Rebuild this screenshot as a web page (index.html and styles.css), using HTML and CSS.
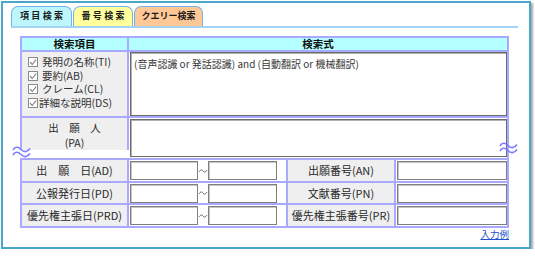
FILE: index.html
```html
<!DOCTYPE html>
<html lang="ja">
<head>
<meta charset="utf-8">
<link rel="stylesheet" href="styles.css">
</head>
<body>
<div class="frame">
  <div class="tabs">
    <div class="tab t1 spaced">項目検索</div>
    <div class="tab t2 spaced">番号検索</div>
    <div class="tab t3">クエリー検索</div>
  </div>
  <div class="grid">
    <div class="hd">検索項目</div>
    <div class="hd span3">検索式</div>

    <div class="lab checks">
      <div class="chk"><svg class="cb" viewBox="0 0 10 10"><rect x="0.5" y="0.5" width="9" height="9"/><path d="M2 5.2 L4.2 7.5 L8.2 2.5"/></svg>発明の名称(TI)</div>
      <div class="chk"><svg class="cb" viewBox="0 0 10 10"><rect x="0.5" y="0.5" width="9" height="9"/><path d="M2 5.2 L4.2 7.5 L8.2 2.5"/></svg>要約(AB)</div>
      <div class="chk"><svg class="cb" viewBox="0 0 10 10"><rect x="0.5" y="0.5" width="9" height="9"/><path d="M2 5.2 L4.2 7.5 L8.2 2.5"/></svg>クレーム(CL)</div>
      <div class="chk tight"><svg class="cb" viewBox="0 0 10 10"><rect x="0.5" y="0.5" width="9" height="9"/><path d="M2 5.2 L4.2 7.5 L8.2 2.5"/></svg>詳細な説明(DS)</div>
    </div>
    <div class="cell span3 pad"><div class="box big">(音声認識 or 発話認識) and (自動翻訳 or 機械翻訳)</div></div>

    <div class="lab two"><div>出　願　人</div><div>(PA)</div></div>
    <div class="cell span3 pad"><div class="box mid"></div></div>

    <div class="lab">出　願　日(AD)</div>
    <div class="cell range"><div class="inp w1"></div><svg class="tilde" viewBox="0 0 10 8"><path d="M1 5 C2.5 2.5 4 2.5 5 4 S7.5 5.5 9 3"/></svg><div class="inp w2"></div></div>
    <div class="lab">出願番号(AN)</div>
    <div class="cell one"><div class="inp w3"></div></div>

    <div class="lab">公報発行日(PD)</div>
    <div class="cell range"><div class="inp w1"></div><svg class="tilde" viewBox="0 0 10 8"><path d="M1 5 C2.5 2.5 4 2.5 5 4 S7.5 5.5 9 3"/></svg><div class="inp w2"></div></div>
    <div class="lab">文献番号(PN)</div>
    <div class="cell one"><div class="inp w3"></div></div>

    <div class="lab">優先権主張日(PRD)</div>
    <div class="cell range"><div class="inp w1"></div><svg class="tilde" viewBox="0 0 10 8"><path d="M1 5 C2.5 2.5 4 2.5 5 4 S7.5 5.5 9 3"/></svg><div class="inp w2"></div></div>
    <div class="lab">優先権主張番号(PR)</div>
    <div class="cell one"><div class="inp w3"></div></div>
  </div>
  <div class="example"><a href="#">入力例</a></div>

  <div class="band"></div>
  <svg class="wave wl" viewBox="0 0 20 14"><path d="M1 5 C3 1.5 6 1.5 9 4.5 S15 7.5 18 3.5"/><path d="M1 10 C3 6.5 6 6.5 9 9.5 S15 12.5 18 8.5"/></svg>
  <svg class="wave wr" viewBox="0 0 20 14"><path d="M1 5 C3 1.5 6 1.5 9 4.5 S15 7.5 18 3.5"/><path d="M1 10 C3 6.5 6 6.5 9 9.5 S15 12.5 18 8.5"/></svg>
</div>
</body>
</html>
```
FILE: styles.css
```css
body {
  margin: 0;
  background: #ffffff;
  font-family: "Noto Sans CJK JP", "Noto Sans", sans-serif;
  color: #222;
}

.frame {
  position: relative;
  box-sizing: border-box;
  margin: 1px 0 0 1px;
  width: 530px;
  height: 248px;
  border: 2px solid #4ba7c9;
  box-shadow: 2px 2px 2px rgba(0, 0, 0, 0.35);
  padding: 3px 0 0 8px;
}

.tabs {
  display: flex;
  gap: 1px;
  width: 507px;
  height: 20px;
  border-bottom: 2px solid #a6d3f5;
}

.tab {
  box-sizing: border-box;
  height: 20px;
  border: 1px solid #74b3e6;
  border-bottom: none;
  border-radius: 7px 7px 0 0;
  font-size: 9px;
  font-weight: bold;
  line-height: 18px;
  text-align: center;
  color: #1a1a1a;
}

.spaced { letter-spacing: 2.4px; text-indent: 2.4px; }
.t1 { width: 61px; background: #bdf7fd; }
.t2 { width: 60px; background: #ffff9e; }
.t3 { width: 69px; background: #ffc795; }

.grid {
  box-sizing: border-box;
  margin: 8px 0 0 9px;
  width: 489px;
  display: grid;
  grid-template-columns: 107px 159px 108px 113px;
  grid-template-rows: 14px 66px 42px 23px 22px 23px;
  border-top: 2px solid #a9a9ff;
  border-left: 2px solid #a9a9ff;
}

.grid > div {
  box-sizing: border-box;
  border-right: 2px solid #a9a9ff;
  border-bottom: 2px solid #a9a9ff;
}

.span3 { grid-column: span 3; }

.hd {
  background: #b4ffff;
  font-size: 10.5px;
  font-weight: bold;
  line-height: 12px;
  text-align: center;
  color: #111;
}

.lab {
  background: #efefef;
  font-size: 11px;
  line-height: 20px;
  text-align: center;
  color: #2a2a2a;
  white-space: nowrap;
}

.lab.two {
  font-size: 10.5px;
  line-height: 15px;
  padding-top: 2px;
}

.checks {
  text-align: left;
  padding: 3px 0 0 6px;
}

.chk {
  height: 13.7px;
  line-height: 13.7px;
  font-size: 10.5px;
  display: flex;
  align-items: center;
  color: #333;
}

.cb {
  flex: none;
  width: 10px;
  height: 10px;
  margin-right: 4px;
  fill: #fff;
  stroke: #8a8a8a;
  stroke-width: 1;
}

.cb path { fill: none; stroke: #7a7a7a; stroke-width: 1.1; }
.tight .cb { margin-right: 1px; }

.pad { padding: 0 0 0 1px; }

.box {
  box-sizing: border-box;
  width: 377px;
  border: 1px solid #6c6c6c;
  box-shadow: inset 1px 1px 0 #b0b0b0;
  background: #fff;
}

.box.big {
  height: 64px;
  font-size: 10px;
  line-height: 12px;
  padding: 5px 0 0 3px;
  color: #383838;
}

.box.mid { height: 38px; margin-top: 1px; }

.range, .one {
  display: flex;
  align-items: center;
  padding-left: 1px;
}

.inp {
  box-sizing: border-box;
  height: 19px;
  border: 1px solid #7f7f7f;
  box-shadow: inset 1px 1px 0 #c4c4c4;
  background: #fff;
}

.w1 { width: 68px; }
.w2 { width: 69px; }
.w3 { width: 110px; }

.tilde {
  flex: none;
  width: 10px;
  height: 8px;
  fill: none;
  stroke: #666;
  stroke-width: 1;
}

.example {
  width: 498px;
  text-align: right;
  font-size: 9.5px;
  line-height: 12px;
  margin-top: 0;
}

.example a { color: #2050d0; }

.band {
  position: absolute;
  left: 9px;
  top: 147px;
  width: 117px;
  height: 8px;
  background: #fff;
}

.wave {
  position: absolute;
  width: 20px;
  height: 14px;
  fill: none;
  stroke: #7d7dff;
  stroke-width: 1.6;
}

.wl { left: 9px; top: 142px; }
.wr { left: 496px; top: 138px; }
```
